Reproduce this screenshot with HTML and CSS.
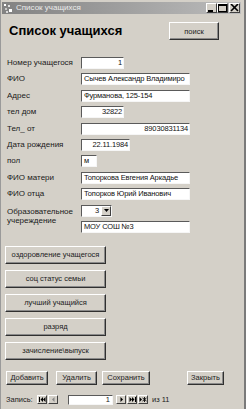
FILE: index.html
```html
<!DOCTYPE html>
<html lang="ru">
<head>
  <meta charset="UTF-8">
  <meta name="viewport" content="width=device-width, initial-scale=1.0">
  <title>Список учащихся</title>
  <link rel="stylesheet" href="styles.css">
</head>
<body>
  <div class="window">
    <div class="titlebar">
      <svg class="app-icon" width="9" height="9" viewBox="0 0 9 9">
        <rect x="0" y="0" width="2" height="2" fill="#fff"/>
        <rect x="4" y="1" width="2" height="2" fill="#e0e0e0"/>
        <rect x="1" y="4" width="2" height="2" fill="#c8c8c8"/>
        <rect x="5" y="5" width="3" height="3" fill="#fff"/>
        <rect x="2" y="7" width="2" height="2" fill="#d8d8d8"/>
      </svg>
      <span class="title">Список учащихся</span>
      <div class="controls">
        <span class="ctl">
          <svg width="9" height="8" viewBox="0 0 9 8"><rect x="1" y="6" width="5" height="2" fill="#000"/></svg>
        </span>
        <span class="ctl">
          <svg width="9" height="8" viewBox="0 0 9 8"><rect x="0.5" y="0.5" width="8" height="7" fill="none" stroke="#000"/><rect x="0" y="0" width="9" height="2" fill="#000"/></svg>
        </span>
        <span class="ctl ctl-close">
          <svg width="9" height="8" viewBox="0 0 9 8"><path d="M1 0 L8 7 M8 0 L1 7" stroke="#000" stroke-width="1.6"/></svg>
        </span>
      </div>
    </div>

    <div class="client">
      <div class="header">
        <h1>Список учащихся</h1>
        <div class="btn search-btn">поиск</div>
      </div>

      <div class="fields">
        <div class="label">Номер учащегося</div>
        <div class="field w-short num">1</div>

        <div class="label">ФИО</div>
        <div class="field w-wide">Сычев Александр Владимиро</div>

        <div class="label">Адрес</div>
        <div class="field w-wide">Фурманова, 125-154</div>

        <div class="label">тел дом</div>
        <div class="field w-short num">32822</div>

        <div class="label">Тел_ от</div>
        <div class="field w-wide num">89030831134</div>

        <div class="label">Дата рождения</div>
        <div class="field w-date num">22.11.1984</div>

        <div class="label">пол</div>
        <div class="field w-tiny">м</div>

        <div class="label">ФИО матери</div>
        <div class="field w-wide">Топоркова Евгения Аркадье</div>

        <div class="label">ФИО отца</div>
        <div class="field w-wide">Топорков Юрий Иванович</div>

        <div class="label label-two">Образовательное учереждение</div>
        <div class="field w-combo combo">
          <span class="combo-value">3</span>
          <span class="combo-arrow">
            <svg width="5" height="3" viewBox="0 0 5 3"><path d="M0 0 H5 L2.5 3 Z" fill="#000"/></svg>
          </span>
        </div>
        <div class="field w-wide">МОУ СОШ №3</div>
      </div>

      <div class="side-buttons">
        <div class="btn side-btn">оздоровление учащегося</div>
        <div class="btn side-btn">соц статус семьи</div>
        <div class="btn side-btn">лучший учащийся</div>
        <div class="btn side-btn">разряд</div>
        <div class="btn side-btn">зачисление\выпуск</div>
      </div>

      <div class="actions">
        <div class="btn act-btn add-btn">Добавить</div>
        <div class="btn act-btn del-btn">Удалить</div>
        <div class="btn act-btn save-btn">Сохранить</div>
        <div class="btn act-btn close-btn">Закрыть</div>
      </div>

      <div class="nav">
        <span class="nav-label">Запись:</span>
        <span class="nav-btn">
          <svg width="7" height="5" viewBox="0 0 7 5"><rect x="0" y="0" width="1" height="5" fill="#000"/><path d="M1.5 2.5 L4 0 V5 Z M4 2.5 L6.5 0 V5 Z" fill="#000"/></svg>
        </span>
        <span class="nav-btn nav-prev">
          <svg width="5" height="5" viewBox="0 0 5 5"><path d="M1 2.5 L3.5 0 V5 Z" fill="#888"/></svg>
        </span>
        <span class="nav-field">1</span>
        <span class="nav-btn">
          <svg width="5" height="5" viewBox="0 0 5 5"><path d="M1.5 0 L4 2.5 L1.5 5 Z" fill="#000"/></svg>
        </span>
        <span class="nav-btn">
          <svg width="7" height="5" viewBox="0 0 7 5"><path d="M0.5 0 L3 2.5 L0.5 5 Z M3 0 L5.5 2.5 L3 5 Z" fill="#000"/><rect x="6" y="0" width="1" height="5" fill="#000"/></svg>
        </span>
        <span class="nav-btn">
          <svg width="8" height="5" viewBox="0 0 8 5"><path d="M0.5 0 L3 2.5 L0.5 5 Z" fill="#000"/><path d="M5.5 0 V5 M3.5 1 L7.5 4 M7.5 1 L3.5 4" stroke="#000" stroke-width="0.9"/></svg>
        </span>
        <span class="nav-total">из 11</span>
      </div>
    </div>
  </div>
</body>
</html>
```

FILE: styles.css
```css
* {
  box-sizing: border-box;
  margin: 0;
  padding: 0;
}

body {
  background-color: #d4d0c8;
  font-family: 'Liberation Sans', Arial, sans-serif;
  font-size: 8px;
  color: #1a1a1a;
}

.window {
  width: 246px;
  height: 409px;
  padding: 2px 3px 0 1px;
  background-color: #d4d0c8;
  border-left: 1px solid #9a9a9a;
  border-right: 2px solid #7a7a7a;
}

/* title bar */

.titlebar {
  height: 12px;
  display: flex;
  align-items: center;
  padding-left: 2px;
  background: linear-gradient(to right, #828282, #bcbcbc);
}

.app-icon {
  flex-shrink: 0;
}

.title {
  margin-left: 3px;
  color: #ececec;
  font-size: 8px;
  line-height: 12px;
}

.controls {
  display: flex;
  margin-left: auto;
  padding-right: 1px;
}

.ctl {
  width: 11px;
  height: 10px;
  display: flex;
  align-items: center;
  justify-content: center;
  background-color: #d4d0c8;
  border: 1px solid;
  border-color: #fff #404040 #404040 #fff;
}

.ctl-close {
  margin-left: 1px;
}

/* header */

.client {
  padding: 0 0 0 4px;
}

.header {
  display: flex;
  align-items: center;
  justify-content: space-between;
  margin-top: 8px;
  height: 18px;
  padding-right: 22px;
}

h1 {
  font-size: 13px;
  font-weight: bold;
  color: #000;
  padding-left: 3px;
  margin-top: -2px;
}

.btn {
  display: flex;
  align-items: center;
  justify-content: center;
  background-color: #d4d0c8;
  border: 1px solid;
  border-color: #fff #303030 #303030 #fff;
  box-shadow: inset -1px -1px #8a8a8a;
  color: #222;
  font-size: 7.5px;
  white-space: nowrap;
}

.search-btn {
  width: 50px;
  height: 18px;
}

/* fields */

.fields {
  display: grid;
  grid-template-columns: 74px auto;
  grid-auto-rows: 12px;
  row-gap: 4.4px;
  margin-top: 17px;
  padding-left: 1px;
}

.label {
  line-height: 12px;
  white-space: nowrap;
}

.label-two {
  grid-row: span 2;
  line-height: 9px;
  padding-top: 2px;
  white-space: normal;
  width: 64px;
}

.field {
  height: 12px;
  background-color: #fff;
  border: 1px solid;
  border-color: #5a5a5a #f6f6f6 #f6f6f6 #5a5a5a;
  padding: 0 1px 0 2px;
  font-size: 7.5px;
  letter-spacing: -0.15px;
  line-height: 10px;
  white-space: nowrap;
  overflow: hidden;
  color: #111;
}

.num {
  text-align: right;
}

.w-short {
  width: 43px;
}

.w-wide {
  width: 109px;
}

.w-date {
  width: 49px;
}

.w-tiny {
  width: 16px;
}

.w-combo {
  width: 31px;
}

.combo {
  display: flex;
  align-items: center;
  padding: 0 0 0 2px;
}

.combo-value {
  flex: 1;
  text-align: right;
  padding-right: 2px;
}

.combo-arrow {
  width: 10px;
  height: 10px;
  display: flex;
  align-items: center;
  justify-content: center;
  background-color: #d4d0c8;
  border: 1px solid;
  border-color: #fff #404040 #404040 #fff;
}

/* side buttons */

.side-buttons {
  display: flex;
  flex-direction: column;
  gap: 6px;
  margin-top: 13px;
  margin-left: -1px;
}

.side-btn {
  width: 101px;
  height: 18px;
}

/* bottom */

.actions {
  display: flex;
  margin-top: 11px;
}

.act-btn {
  height: 14px;
}

.add-btn {
  width: 42px;
}

.del-btn {
  width: 41px;
  margin-left: 8px;
}

.save-btn {
  width: 48px;
  margin-left: 5px;
}

.close-btn {
  width: 37px;
  margin-left: 37px;
}

.nav {
  display: flex;
  align-items: center;
  margin-top: 10px;
  height: 10px;
  font-size: 7.5px;
}

.nav-label {
  width: 31px;
}

.nav-btn {
  width: 10px;
  height: 9px;
  display: flex;
  align-items: center;
  justify-content: center;
  background-color: #d4d0c8;
  border: 1px solid;
  border-color: #fff #404040 #404040 #fff;
  margin-right: 1px;
}

.nav-prev {
  margin-right: 10px;
}

.nav-field {
  width: 45px;
  height: 10px;
  background-color: #fff;
  border: 1px solid;
  border-color: #5a5a5a #f6f6f6 #f6f6f6 #5a5a5a;
  text-align: right;
  padding-right: 2px;
  line-height: 8px;
  margin-right: 3px;
}

.nav-total {
  margin-left: 3px;
}
```
